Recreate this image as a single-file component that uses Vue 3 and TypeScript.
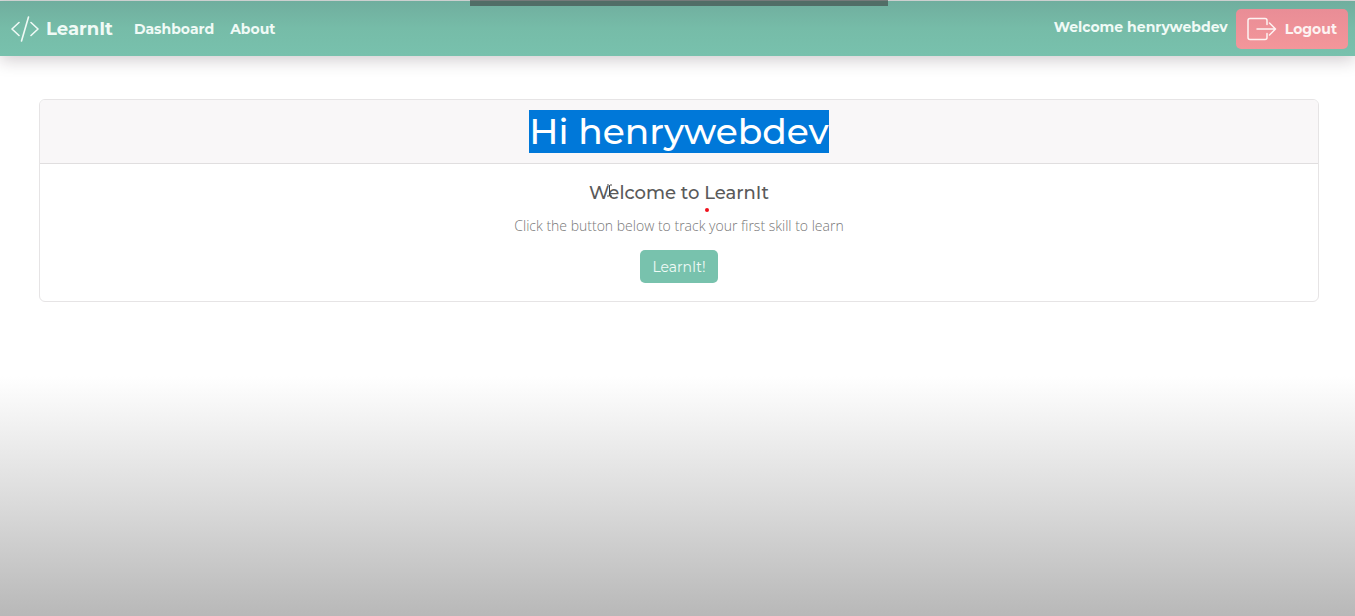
<script setup lang="ts">
import { ref } from 'vue'

interface NavItem {
  label: string
  href: string
}

const username = ref<string>('henrywebdev')
const navItems: NavItem[] = [
  { label: 'Dashboard', href: '#dashboard' },
  { label: 'About', href: '#about' },
]
</script>

<template>
  <div class="page">
    <div class="top-handle"></div>
    <header class="navbar">
      <a class="brand" href="#home">
        <svg class="brand-icon" viewBox="0 0 28 26" aria-hidden="true">
          <path d="M8 6.5 1 13 8 19.5M20 6.5 27 13 20 19.5M17.5 1 10.5 25" />
        </svg>
        <span>LearnIt</span>
      </a>
      <nav class="links">
        <a v-for="item in navItems" :key="item.label" :href="item.href">{{ item.label }}</a>
      </nav>
      <div class="account">
        <span class="welcome">Welcome {{ username }}</span>
        <button class="logout" type="button">
          <svg class="logout-icon" viewBox="0 0 30 24" aria-hidden="true">
            <path d="M20 7.500V3.500Q20 1.500 18 1.500H3Q1 1.500 1 3.500V20.500Q1 22.500 3 22.500H18Q20 22.500 20 20.500V16.500M10 12H28M22.500 6 28.500 12 22.500 18" />
          </svg>
          <span>Logout</span>
        </button>
      </div>
    </header>
    <main class="content">
      <section class="card">
        <div class="card-header">
          <h1><span class="selected">Hi {{ username }}</span></h1>
        </div>
        <div class="card-body">
          <h2>
            Welcome to LearnIt
            <svg class="text-cursor" viewBox="0 0 7 13" aria-hidden="true">
              <path d="M1 1H3L3.500 1.500 4 1H6M3.500 1.500V11.500M1 12H3L3.500 11.500 4 12H6" />
            </svg>
            <span class="pointer-dot"></span>
          </h2>
          <p>Click the button below to track your first skill to learn</p>
          <button class="primary" type="button">LearnIt!</button>
        </div>
      </section>
    </main>
  </div>
</template>

<style>
body {
  margin: 0;
  background: #fff;
}
</style>

<style scoped>
.page {
  position: relative;
  box-sizing: border-box;
  min-height: 100vh;
  border-top: 1px solid #d9dddc;
  background: linear-gradient(to bottom, #fff 0, #fff 61%, #dadada 82%, #b8b8b8 100%);
  font-family: Montserrat, Inter, "Open Sans", sans-serif;
}

.top-handle {
  position: absolute;
  z-index: 2;
  top: -1px;
  left: 50%;
  width: 418px;
  height: 6px;
  margin-left: -208px;
  background: rgba(60, 65, 65, 0.6);
}

.navbar {
  display: flex;
  align-items: center;
  box-sizing: border-box;
  height: 55px;
  padding: 0 7px 0 11px;
  background: linear-gradient(to bottom, #70ae9e, #76bca8 50%, #78c1ad);
  box-shadow: 0 4px 16px rgba(40, 20, 30, 0.22);
  color: #f0faf6;
  font-weight: 700;
}

.brand {
  display: flex;
  align-items: center;
  gap: 7px;
  color: inherit;
  font-size: 18px;
  text-decoration: none;
}

.brand-icon {
  width: 28px;
  height: 26px;
  fill: none;
  stroke: currentColor;
  stroke-width: 1.6;
  stroke-linecap: round;
  stroke-linejoin: round;
}

.links {
  display: flex;
  gap: 16px;
  margin-left: 21px;
  font-size: 14px;
}

.links a {
  color: inherit;
  text-decoration: none;
}

.account {
  display: flex;
  align-items: center;
  gap: 8px;
  margin-left: auto;
}

.welcome {
  padding-bottom: 4px;
  font-size: 14px;
}

.logout {
  display: flex;
  align-items: center;
  gap: 8px;
  height: 40px;
  padding: 0 11px;
  border: 0;
  border-radius: 5px;
  background: linear-gradient(to bottom, #e98d96, #f3969a);
  color: #fdf3f2;
  font: inherit;
  font-size: 14px;
}

.logout-icon {
  width: 30px;
  height: 24px;
  fill: none;
  stroke: currentColor;
  stroke-width: 1.5;
  stroke-linecap: round;
  stroke-linejoin: round;
}

.content {
  padding: 43px 36px 43px 39px;
}

.card {
  border: 1px solid #e6e4e5;
  border-radius: 6px;
  overflow: hidden;
  background: #fff;
  text-align: center;
}

.card-header {
  padding: 10px 20px;
  border-bottom: 1px solid #e0dedf;
  background: #f9f7f8;
}

h1 {
  margin: 0;
  font-size: 36px;
  font-weight: 500;
  line-height: 43px;
}

.selected {
  display: inline-block;
  background: #0078d9;
  color: #fff;
}

.card-body {
  padding: 17px 20px 18px;
}

h2 {
  position: relative;
  width: fit-content;
  margin: 0 auto;
  color: #5a5a5a;
  font-size: 18px;
  font-weight: 500;
  line-height: 24px;
}

.text-cursor {
  position: absolute;
  top: 3px;
  left: 17px;
  width: 7px;
  height: 13px;
  fill: none;
  stroke: #444;
  stroke-width: 1;
}

.pointer-dot {
  position: absolute;
  top: 27px;
  left: 116px;
  width: 4px;
  height: 4px;
  border-radius: 50%;
  background: #f0101c;
}

p {
  margin: 10px 0 13px;
  color: #777;
  font-family: "Open Sans", "Noto Sans", sans-serif;
  font-size: 14px;
  font-weight: 300;
  line-height: 22px;
}

.primary {
  height: 33px;
  padding: 0 12px;
  border: 0;
  border-radius: 5px;
  background: #78c2ad;
  color: #effaf6;
  font-family: inherit;
  font-size: 14px;
}
</style>
